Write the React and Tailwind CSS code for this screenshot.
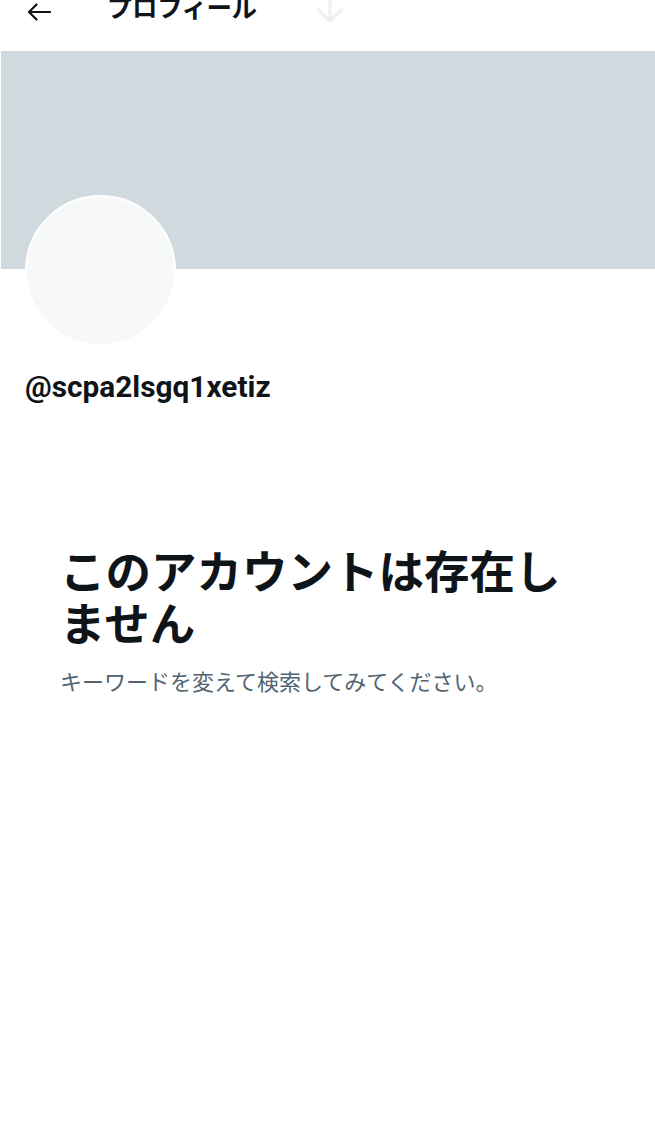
import React from "react";

const font = { fontFamily: 'Roboto, "Noto Sans CJK JP", sans-serif' };

function BackArrow() {
  return (
    <svg width="24" height="18" viewBox="0 0 24 18" fill="none" className="shrink-0">
      <path d="M23 9H2.5M9.5 1.5L2 9l7.5 7.5" stroke="#0f1419" strokeWidth="2.2" strokeLinecap="round" strokeLinejoin="round" />
    </svg>
  );
}

function PullArrow() {
  return (
    <svg width="32" height="24" viewBox="0 0 32 24" fill="none" className="shrink-0">
      <path d="M16 0v21M5 11l11 11 11-11" stroke="#eef0f1" strokeWidth="3.2" strokeLinecap="round" strokeLinejoin="round" />
    </svg>
  );
}

export default function App() {
  return (
    <div className="w-[655px] min-h-[1126px] bg-white overflow-hidden" style={font}>
      {/* top bar, partly scrolled out of view */}
      <div className="h-[51px] flex items-start">
        <div className="ml-[27px] mt-[3px]">
          <BackArrow />
        </div>
        <div className="ml-[56px] -mt-[6px] text-[25.5px] leading-[28px] font-bold text-[#0f1419] tracking-[-0.5px]">
          プロフィール
        </div>
        <div className="ml-[57px] -mt-[1px]">
          <PullArrow />
        </div>
      </div>

      {/* banner */}
      <div className="h-[218px] bg-[#cfd9de] ml-[1px]" />

      {/* avatar + handle */}
      <div className="px-[25px]">
        <div className="-mt-[74px] w-[151px] h-[151px] rounded-full bg-[#f7f9f9] border-2 border-white" />
        <div className="mt-[23px] text-[29.8px] leading-[36px] font-bold text-[#0f1419]">
          @scpa2lsgq1xetiz
        </div>
      </div>

      {/* empty state */}
      <div className="px-[60px] mt-[143px]">
        <div className="text-[45.5px] leading-[52px] font-bold text-[#0f1419]">
          このアカウントは存在しません
        </div>
        <div className="mt-[17px] text-[22px] leading-[28px] text-[#536471]">
          キーワードを変えて検索してみてください。
        </div>
      </div>
    </div>
  );
}
